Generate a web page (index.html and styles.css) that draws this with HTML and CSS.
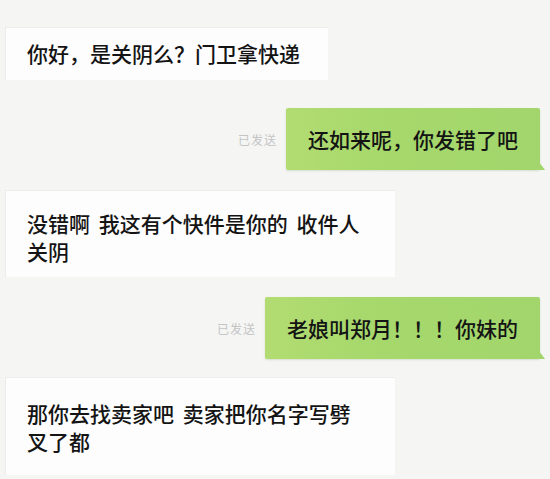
FILE: index.html
```html
<!DOCTYPE html>
<html lang="zh-CN">

<head>
  <meta charset="UTF-8">
  <meta name="viewport" content="width=device-width, initial-scale=1.0">
  <title>聊天记录</title>
  <link rel="stylesheet" href="styles.css">
</head>

<body>
  <main class="chat">
    <div class="row row-left first">
      <div class="bubble bubble-in w1">你好，是关阴么？门卫拿快递</div>
    </div>

    <div class="row row-right r2">
      <span class="status">已发送</span>
      <div class="bubble bubble-out">还如来呢，你发错了吧</div>
    </div>

    <div class="row row-left r3">
      <div class="bubble bubble-in w2">没错啊 我这有个快件是你的 收件人<br>关阴</div>
    </div>

    <div class="row row-right r4">
      <span class="status">已发送</span>
      <div class="bubble bubble-out">老娘叫郑月！！！你妹的</div>
    </div>

    <div class="row row-left r5">
      <div class="bubble bubble-in w2">那你去找卖家吧 卖家把你名字写劈<br>叉了都</div>
    </div>
  </main>
</body>

</html>
```

FILE: styles.css
```css
/* chat screenshot */
* {
  margin: 0;
  padding: 0;
  box-sizing: border-box;
}

body {
  width: 550px;
  height: 479px;
  overflow: hidden;
  background-color: #f5f5f4;
  font-family: "Noto Sans CJK SC", "Noto Sans", sans-serif;
  color: #141414;
}

.chat {
  display: flex;
  flex-direction: column;
  padding: 27px 10px 0 5px;
}

.row {
  display: flex;
  align-items: center;
}

.row-right {
  justify-content: flex-end;
}

.r2 {
  margin-top: 28px;
}

.r3 {
  margin-top: 20px;
}

.r4 {
  margin-top: 20px;
}

.r5 {
  margin-top: 18px;
}

.bubble {
  position: relative;
  font-size: 21px;
  line-height: 28px;
  font-weight: 500;
}

.bubble-in {
  background-color: #fdfdfd;
  border-left: 1px solid #ececec;
  border-top: 1px solid #ededed;
  padding: 11px 20px 13px 21px;
  word-spacing: 4px;
}

.w1 {
  width: 323px;
}

.w2 {
  width: 390px;
  padding-top: 18px;
  padding-bottom: 12px;
}

.r5 .w2 {
  padding-top: 21px;
  padding-bottom: 20px;
}

.bubble-out {
  background: linear-gradient(90deg, #b2dc72 0%, #a6d86c 40%, #a2d66c 100%);
  padding: 17px 22px 17px 22px;
  border-radius: 2px;
  box-shadow: 0 1px 2px rgba(120, 150, 90, 0.25);
}

.bubble-out::after {
  content: "";
  position: absolute;
  right: -5px;
  bottom: 0;
  border-left: 6px solid #a2d66c;
  border-top: 8px solid transparent;
}

.status {
  font-size: 12px;
  color: #c4c4c4;
  margin-right: 9px;
  letter-spacing: 1px;
}
```
